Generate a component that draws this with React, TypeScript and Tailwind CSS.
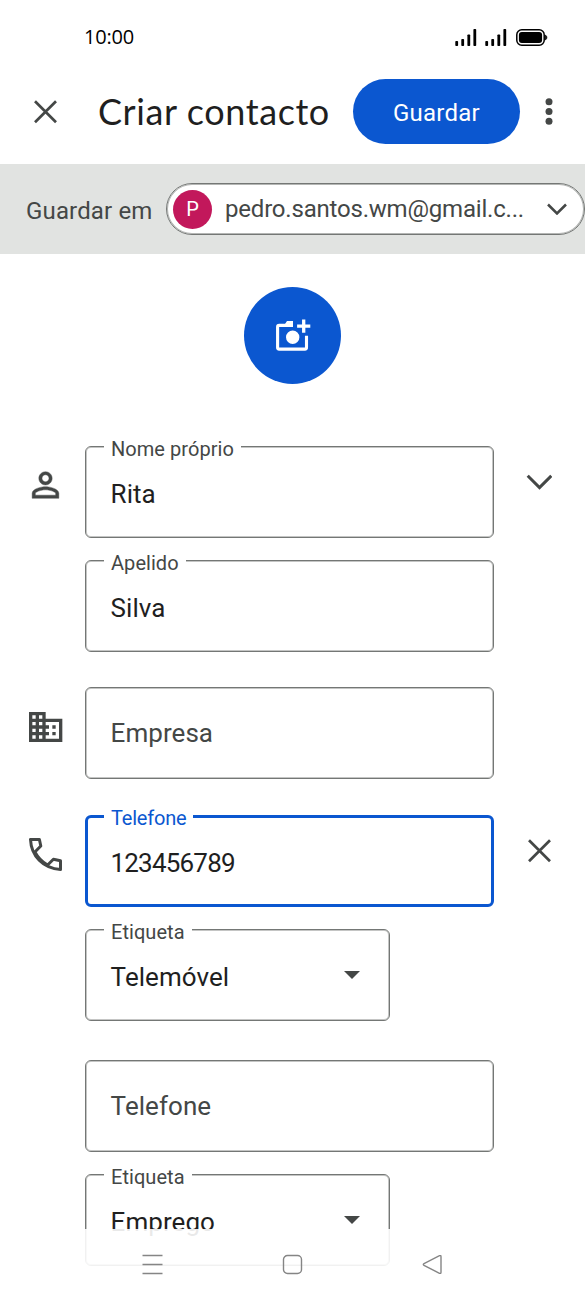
import React from 'react'
import clsx from 'clsx'

interface FieldProps {
  label?: string;
  value?: string;
  placeholder?: string;
  focused?: boolean;
  select?: boolean;
  numeric?: boolean;
}

const Field: React.FC<FieldProps> = ({ label, value, placeholder, focused, select, numeric }) => (
  <div
    className={clsx(
      'relative flex h-[92px] items-center justify-between rounded-[6px]',
      focused ? 'border-[3px] border-[#0b57d0] pl-[22.5px]' : 'border border-[#747775] pl-[24.6px] shadow-[inset_0_0_0_1px_#c4c5c4]',
      select ? 'w-[305px] pr-[29.5px]' : 'w-[409px]'
    )}
  >
    {label && (
      <span
        className={clsx(
          'absolute bg-white px-[7px] text-[20px] leading-[24px]',
          focused ? 'left-[16px] -top-[12px] tracking-[-0.2px] text-[#0b57d0]' : 'left-[18px] -top-[10px] tracking-[0.05px] text-[#444746]'
        )}
      >
        {label}
      </span>
    )}
    <span
      className={clsx(
        'text-[26px] leading-[32px]',
        numeric ? 'tracking-[-0.8px]' : 'tracking-[0.05px]',
        value ? 'pt-[4px] text-[#1f1f1f]' : '-mt-[1px] text-[#444746]'
      )}
    >
      {value || placeholder}
    </span>
    {select && (
      <svg className="h-[8px] w-[16px]" viewBox="0 0 16 8" fill="#444746">
        <path d="M0 0h16L8 8z" />
      </svg>
    )}
  </div>
)

const Row: React.FC<{ icon?: React.ReactNode; action?: React.ReactNode; children: React.ReactNode }> = ({ icon, action, children }) => (
  <div className="flex h-[92px]">
    <div className="flex w-[85px] shrink-0 justify-center pl-[6px]">{icon}</div>
    {children}
    {action && <div className="flex flex-1 justify-center pr-px">{action}</div>}
  </div>
)

const CloseIcon = ({ className }: { className?: string }) => (
  <svg className={clsx('h-[24px] w-[24px]', className)} viewBox="-0.5 0 24 24" fill="none" stroke="#444746" strokeWidth="2.7">
    <path d="M1.5 1.3l21 21M22.5 1.3l-21 21" />
  </svg>
)

const SignalIcon = () => (
  <svg className="h-[17px] w-[22px]" viewBox="0 0 22 17" fill="#000">
    <rect x="0.3" y="12" width="2.8" height="5" rx="0.8" />
    <rect x="6.3" y="10" width="2.8" height="7" rx="0.8" />
    <rect x="12.4" y="5.5" width="2.8" height="11.5" rx="0.8" />
    <rect x="18.4" y="0" width="2.8" height="17" rx="0.8" />
  </svg>
)

const PersonIcon = () => (
  <svg className="mt-[19px] h-[40px] w-[40px]" viewBox="0.3 0 24 24" fill="#444746">
    <path
      d="M12 5.9c1.16 0 2.1.94 2.1 2.1s-.94 2.1-2.1 2.1S9.9 9.16 9.9 8s.94-2.1 2.1-2.1m0 9c2.97 0 6.1 1.46 6.1 2.1v1.1H5.9V17c0-.64 3.13-2.1 6.1-2.1M12 4C9.79 4 8 5.79 8 8s1.79 4 4 4 4-1.79 4-4-1.79-4-4-4zm0 9c-2.67 0-8 1.34-8 4v3h16v-3c0-2.66-5.33-4-8-4z"
      stroke="#444746"
      strokeWidth="0.25"
    />
  </svg>
)

const CompanyIcon = () => (
  <svg className="mt-[20px] h-[40px] w-[40px]" viewBox="0.2 0 24 24" fill="#444746">
    <path
      d="M12 7V3H2v18h20V7H12zM6 19H4v-2h2v2zm0-4H4v-2h2v2zm0-4H4V9h2v2zm0-4H4V5h2v2zm4 12H8v-2h2v2zm0-4H8v-2h2v2zm0-4H8V9h2v2zm0-4H8V5h2v2zm10 12h-8v-2h2v-2h-2v-2h2v-2h-2V9h8v10zm-2-8h-2v2h2v-2zm0 4h-2v2h2v-2z"
    />
  </svg>
)

const PhoneIcon = () => (
  <svg className="mt-[23px] h-[33px] w-[33px]" viewBox="0 0 33 33" fill="none" stroke="#444746" strokeWidth="3">
    <path d="M1.5 1.5H10.4L11.8 8L5.9 14C8.8 19.5 13 24 18.6 27L24.4 21.2L31.5 22.7V31.5C14 30.5 2.2 18 1.5 1.5Z" strokeLinejoin="round" />
  </svg>
)

const CameraIcon = () => (
  <svg className="h-[34px] w-[38px]" viewBox="0 0 38 34" fill="none">
    <path d="M18.5 6.4H5.2a1.6 1.6 0 0 0-1.6 1.6v20.5a1.6 1.6 0 0 0 1.600 1.6h25.7a1.6 1.6 0 0 0 1.6-1.6V16.7" stroke="#fff" strokeWidth="3.1" />
    <path d="M10 6.5l3-4.5h6v6h-9zM18.7 18.3m-6.7 0a6.7 6.7 0 1 0 13.4 0a6.7 6.7 0 1 0-13.4 0" fill="#fff" />
    <path d="M29.7 0.6v13.2M23.1 7.2h13.2" stroke="#fff" strokeWidth="3.3" />
  </svg>
)

export default function App() {
  return (
    <div className="relative flex h-[1300px] w-[585px] flex-col overflow-hidden bg-white font-[Roboto,sans-serif]">
      {/* Status bar */}
      <div className="flex h-[74px] items-center justify-between pr-[37px] pl-[84px]">
        <span className="font-['Open_Sans',sans-serif] text-[20px] leading-[24px] tracking-[-0.2px] text-black">10:00</span>
        <div className="flex items-center">
          <SignalIcon />
          <div className="w-[8px]" />
          <SignalIcon />
          <svg className="ml-[9px] h-[17px] w-[32px]" viewBox="0 0 32 17">
            <rect x="0.8" y="0.8" width="27.4" height="15.4" rx="5" fill="none" stroke="#000" strokeWidth="1.5" />
            <rect x="2.9" y="2.9" width="23.2" height="11.2" rx="3" fill="#000" />
            <path d="M29.3 6.2c2 .4 2 4.2 0 4.6z" fill="#000" stroke="#000" strokeWidth="0.8" />
          </svg>
        </div>
      </div>

      {/* Header */}
      <div className="mt-[5px] flex h-[65px] items-center pl-[33px]">
        <CloseIcon />
        <h1 className="-mt-[2px] ml-[41px] w-[255px] font-[Lato,sans-serif] text-[36px] leading-[44px] tracking-[0.6px] whitespace-nowrap text-[#1f1f1f]">
          Criar contacto
        </h1>
        <button className="h-[65px] w-[167px] rounded-full bg-[#0b57d0] pt-[2px] text-[24px] font-[450] tracking-[0.25px] text-white">Guardar</button>
        <svg className="ml-[25px] h-[27px] w-[8px]" viewBox="0 0 8 27" fill="#444746">
          <circle cx="4" cy="3.7" r="3.5" />
          <circle cx="4" cy="13.5" r="3.5" />
          <circle cx="4" cy="23.3" r="3.5" />
        </svg>
      </div>

      {/* Account */}
      <div className="mt-[20px] flex h-[90px] shrink-0 items-center bg-[#e1e3e1] pl-[26px]">
        <span className="w-[140px] pt-[3px] text-[24px] font-[450] tracking-[0.15px] whitespace-nowrap text-[#444746]">Guardar em</span>
        <div className="flex h-[52px] w-[419px] shrink-0 items-center rounded-full border border-[#747775] bg-white pl-[6px] shadow-[inset_0_0_0_1px_#b4b6b4]">
          <div className="flex h-[39px] w-[39px] items-center justify-center rounded-full bg-[#c2185b] text-[20px] text-white">P</div>
          <span className="ml-[13px] w-[322px] text-[24px] font-[450] tracking-[-0.2px] whitespace-nowrap text-[#444746]">pedro.santos.wm@gmail.c...</span>
          <svg className="h-[12px] w-[20px]" viewBox="0 0 20 12" fill="none" stroke="#444746" strokeWidth="2.5">
            <path d="M1 1.5l9 9l9-9" />
          </svg>
        </div>
      </div>

      {/* Photo */}
      <div className="mt-[33px] flex h-[97px] w-[97px] shrink-0 items-center justify-center self-center rounded-full bg-[#0b57d0]">
        <CameraIcon />
      </div>

      {/* Form */}
      <div className="mt-[62px] flex shrink-0 flex-col">
        <Row
          icon={<PersonIcon />}
          action={
            <svg className="mt-[28px] h-[16px] w-[26px]" viewBox="-0.5 0 26 16" fill="none" stroke="#444746" strokeWidth="3">
              <path d="M1.2 1.8l11.8 11.8l11.8-11.8" />
            </svg>
          }
        >
          <Field label="Nome próprio" value="Rita" />
        </Row>
        <div className="mt-[22px]">
          <Row>
            <Field label="Apelido" value="Silva" />
          </Row>
        </div>
        <div className="mt-[35px]">
          <Row icon={<CompanyIcon />}>
            <Field placeholder="Empresa" />
          </Row>
        </div>
        <div className="mt-[36px]">
          <Row icon={<PhoneIcon />} action={<CloseIcon className="mt-[24px]" />}>
            <Field label="Telefone" value="123456789" focused numeric />
          </Row>
        </div>
        <div className="mt-[22px]">
          <Row>
            <Field label="Etiqueta" value="Telemóvel" select />
          </Row>
        </div>
        <div className="mt-[39px]">
          <Row>
            <Field placeholder="Telefone" />
          </Row>
        </div>
        <div className="mt-[22px]">
          <Row>
            <Field label="Etiqueta" value="Emprego" select />
          </Row>
        </div>
      </div>

      {/* System navigation */}
      <div className="absolute bottom-0 left-0 flex h-[71px] w-full justify-center gap-[119px] bg-white/90 pt-[25px]">
        <svg className="h-[21px] w-[21px]" viewBox="0 0 21 21" fill="none" stroke="#858585" strokeWidth="1.5">
          <path d="M.5 1.5h20M.5 10.5h20M.5 19.5h20" />
        </svg>
        <svg className="h-[21px] w-[21px]" viewBox="0 0 21 21" fill="none" stroke="#858585" strokeWidth="1.4">
          <rect x="1.5" y="1.5" width="18" height="18" rx="4" />
        </svg>
        <svg className="h-[21px] w-[21px]" viewBox="0 0 21 21" fill="none" stroke="#858585" strokeWidth="1.4">
          <path d="M2 9.6L17.5 1.7q1.5-.5 1.5 1v15.6q0 1.5-1.5 1L2 11.4q-1.4-.9 0-1.8z" />
        </svg>
      </div>
    </div>
  )
}
